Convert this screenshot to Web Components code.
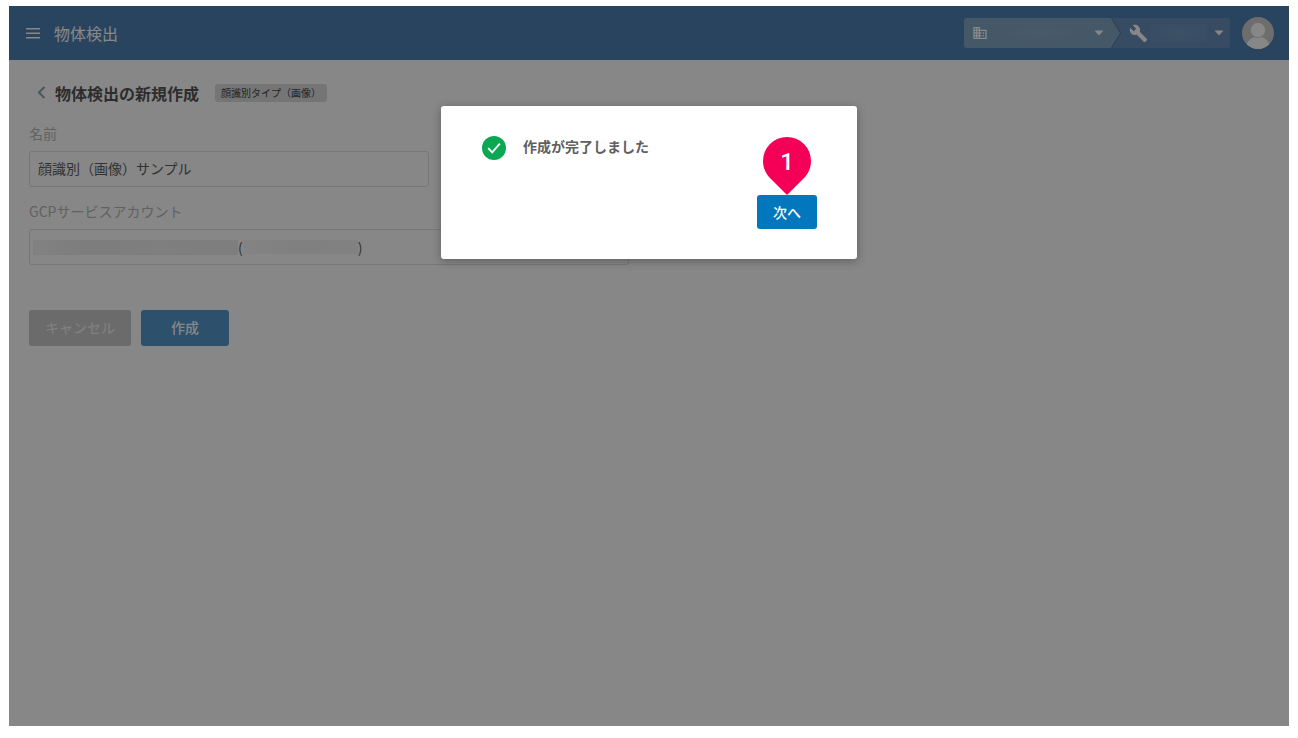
<!DOCTYPE html>
<html lang="ja">
<head>
<meta charset="utf-8">
<meta name="viewport" content="width=device-width, initial-scale=1">
<title>物体検出</title>
<style>
  body {
    margin: 6px 9px 12px;
    background: #fff;
    color: #606060;
    font: 14px/20px "Noto Sans CJK JP", sans-serif;
  }
</style>
</head>
<body>
<app-shell>
  <app-header slot="header" title-text="物体検出"></app-header>
  <page-heading title-text="物体検出の新規作成" tag="顔識別タイプ（画像）"></page-heading>
  <create-form name-value="顔識別（画像）サンプル"></create-form>
  <result-dialog slot="overlay" message="作成が完了しました">
    <app-button slot="action" kind="primary">次へ</app-button>
    <step-pin slot="pin">1</step-pin>
  </result-dialog>
</app-shell>

<script>
class AppShell extends HTMLElement {
  constructor() {
    super();
    this.attachShadow({ mode: 'open' });
  }

  connectedCallback() {
    this.shadowRoot.innerHTML = `
      <style>
        :host {
          display: block;
          position: relative;
          min-height: calc(100vh - 18px);
          background: #fff;
          box-shadow: 0 2px 10px rgba(0, 0, 0, 0.22);
        }

        main {
          padding: 20px;
        }

        .overlay {
          position: absolute;
          inset: 0;
          display: flex;
          justify-content: center;
          align-items: flex-start;
          padding-top: 100px;
          background: rgba(0, 0, 0, 0.47);
        }
      </style>
      <slot name="header"></slot>
      <main><slot></slot></main>
      <div class="overlay"><slot name="overlay"></slot></div>
    `;
  }
}

class AppHeader extends HTMLElement {
  constructor() {
    super();
    this.attachShadow({ mode: 'open' });
  }

  connectedCallback() {
    const title = this.getAttribute('title-text') || '';

    this.shadowRoot.innerHTML = `
      <style>
        :host {
          display: flex;
          align-items: center;
          height: 54px;
          padding: 0 15px;
          background: #4f80b3;
          color: #fff;
        }

        svg {
          display: block;
          flex: none;
        }

        .menu {
          padding: 0;
          border: 0;
          background: none;
          color: inherit;
        }

        h1 {
          flex: 1;
          margin: 0 0 0 12px;
          font-size: 16px;
          font-weight: 400;
          line-height: 24px;
        }

        .avatar {
          margin-left: 12px;
          padding: 0;
          border: 0;
          background: none;
        }
      </style>
      <button class="menu" type="button" aria-label="メニュー">
        <svg width="18" height="18" viewBox="0 0 18 18" stroke="currentColor" stroke-width="1.5">
          <path d="M2 4.7h14M2 9.2h14M2 13.7h14"/>
        </svg>
      </button>
      <h1>${title}</h1>
      <scope-picker></scope-picker>
      <button class="avatar" type="button" aria-label="アカウント">
        <svg width="32" height="32" viewBox="0 0 32 32">
          <clipPath id="round"><circle cx="16" cy="16" r="16"/></clipPath>
          <g clip-path="url(#round)">
            <rect width="32" height="32" fill="#cfcfcf"/>
            <path d="M16 19.5c6 0 10.5 4 11.5 9V34h-23v-5.500c1-5 5.500-9 11.500-9z" fill="#fff"/>
            <circle cx="16" cy="13" r="8" fill="#cfcfcf"/>
            <circle cx="16" cy="13" r="7.200" fill="#fff"/>
          </g>
        </svg>
      </button>
    `;
  }
}

class ScopePicker extends HTMLElement {
  constructor() {
    super();
    this.attachShadow({ mode: 'open' });
  }

  connectedCallback() {
    this.shadowRoot.innerHTML = `
      <style>
        :host {
          display: flex;
          height: 30px;
          border-radius: 3px;
          overflow: hidden;
          background: #6890b9;
          color: #fff;
        }

        label {
          display: flex;
          align-items: center;
        }

        svg {
          display: block;
          flex: none;
        }

        .org, .org-edge {
          clip-path: polygon(0 0, calc(100% - 9px) 0, 100% 50%, calc(100% - 9px) 100%, 0 100%);
        }

        .org {
          height: 100%;
          padding: 0 16px 0 8px;
          background: #83a6c4;
        }

        .org-edge {
          padding-right: 1px;
          background: #4676aa;
        }

        .project {
          padding: 0 6px 0 8px;
        }

        select {
          appearance: none;
          height: 18px;
          margin: 0 5px;
          padding: 0;
          border: 0;
          border-radius: 0;
          color: inherit;
          font: inherit;
        }

        .org select {
          width: 96px;
          background: radial-gradient(closest-side, #8babc7, #83a6c4);
        }

        .project select {
          width: 56px;
          margin: 0 7px 0 3px;
          background: radial-gradient(closest-side, #7398c1, #6c93bd);
        }
      </style>
      <div class="org-edge">
        <label class="org">
          <svg width="16" height="16" viewBox="0 0 24 24" fill="currentColor">
            <path d="M12 7V3H2v18h20V7H12zM6 19H4v-2h2v2zm0-4H4v-2h2v2zm0-4H4V9h2v2zm0-4H4V5h2v2zm4 12H8v-2h2v2zm0-4H8v-2h2v2zm0-4H8V9h2v2zm0-4H8V5h2v2zm10 12h-8v-2h2v-2h-2v-2h2v-2h-2V9h8v10zm-2-8h-2v2h2v-2zm0 4h-2v2h2v-2z"/>
          </svg>
          <select aria-label="組織"><option></option></select>
          <svg width="10" height="6" viewBox="0 0 10 6" fill="currentColor"><path d="M0.500 0.500h9L5 5.500z"/></svg>
        </label>
      </div>
      <label class="project">
        <svg width="19" height="19" viewBox="0 0 24 24" fill="currentColor">
          <path d="M22.700 19l-9.100-9.100c.9-2.300.4-5-1.500-6.900-2-2-5-2.400-7.400-1.300L9 6 6 9 1.600 4.700C.4 7.100.9 10.100 2.900 12.100c1.900 1.900 4.600 2.400 6.900 1.500l9.100 9.100c.4.4 1 .4 1.400 0l2.300-2.300c.5-.4.5-1.100.1-1.400z"/>
        </svg>
        <select aria-label="プロジェクト"><option></option></select>
        <svg width="10" height="6" viewBox="0 0 10 6" fill="currentColor"><path d="M0.500 0.500h9L5 5.500z"/></svg>
      </label>
    `;
  }
}

class PageHeading extends HTMLElement {
  constructor() {
    super();
    this.attachShadow({ mode: 'open' });
  }

  connectedCallback() {
    const title = this.getAttribute('title-text') || '';
    const tag = this.getAttribute('tag') || '';

    this.shadowRoot.innerHTML = `
      <style>
        :host {
          display: flex;
          align-items: center;
          margin-bottom: 17px;
        }

        a {
          padding: 0 8px 0 6px;
          color: #8fa0a6;
        }

        svg {
          display: block;
        }

        h2 {
          margin: 0;
          color: #555;
          font-size: 16px;
          font-weight: 700;
          line-height: 26px;
        }

        .tag {
          margin-left: 16px;
          padding: 0 6px;
          border-radius: 3px;
          background: #dedede;
          color: #444;
          font-size: 10px;
          line-height: 18px;
        }
      </style>
      <a href="#" aria-label="戻る">
        <svg width="12" height="14" viewBox="0 0 12 14" fill="none" stroke="currentColor" stroke-width="2">
          <path d="M9.500 1L4 6.500l5.500 5.500"/>
        </svg>
      </a>
      <h2>${title}</h2>
      <span class="tag">${tag}</span>
    `;
  }
}

class CreateForm extends HTMLElement {
  constructor() {
    super();
    this.attachShadow({ mode: 'open' });
  }

  connectedCallback() {
    const name = this.getAttribute('name-value') || '';

    this.shadowRoot.innerHTML = `
      <style>
        :host {
          display: block;
        }

        .field {
          display: grid;
          gap: 8px;
          margin-bottom: 14px;
        }

        .field > label {
          color: #b8b8b8;
        }

        input, select {
          appearance: none;
          box-sizing: border-box;
          width: 100%;
          height: 36px;
          padding: 0 8px 2px;
          border: 1px solid #e0e0e0;
          border-radius: 3px;
          background: #fff;
          color: inherit;
          font: inherit;
        }

        input {
          max-width: 400px;
        }

        /* the masked account is laid over the select in the same cell */
        .account {
          display: grid;
          align-items: center;
          max-width: 600px;
        }

        .account > * {
          grid-area: 1 / 1;
        }

        .value {
          display: flex;
          align-items: center;
          padding-left: 4px;
          pointer-events: none;
        }

        .mask {
          width: 205px;
          height: 15px;
          background: linear-gradient(90deg, #f4f4f4, #ececec 30%, #f0f0f0 60%, #eee);
        }

        .mask.short {
          width: 115px;
          height: 14px;
          background: linear-gradient(90deg, #f8f8f8, #f1f1f1 50%, #f4f4f4);
        }

        .actions {
          display: flex;
          gap: 10px;
          margin-top: 45px;
        }
      </style>
      <form>
        <div class="field">
          <label for="name">名前</label>
          <input id="name" type="text" value="${name}">
        </div>
        <div class="field">
          <label for="account">GCPサービスアカウント</label>
          <div class="account">
            <select id="account"><option></option></select>
            <div class="value">
              <span class="mask"></span><span>(</span><span class="mask short"></span><span>)</span>
            </div>
          </div>
        </div>
        <div class="actions">
          <app-button kind="muted">キャンセル</app-button>
          <app-button kind="submit">作成</app-button>
        </div>
      </form>
    `;
  }
}

class AppButton extends HTMLElement {
  constructor() {
    super();
    this.attachShadow({ mode: 'open' });
  }

  connectedCallback() {
    const kinds = {
      muted: { bg: '#cbcbcb', color: '#f4f4f4', padding: '7px 16px 9px', weight: 400 },
      submit: { bg: '#5599cc', color: '#fff', padding: '7px 30px 9px', weight: 500 },
      primary: { bg: '#0277bd', color: '#fff', padding: '7px 16px', weight: 500 }
    };
    const kind = kinds[this.getAttribute('kind')] || kinds.primary;

    this.shadowRoot.innerHTML = `
      <style>
        :host {
          display: block;
        }

        button {
          display: block;
          padding: ${kind.padding};
          border: 0;
          border-radius: 3px;
          background: ${kind.bg};
          color: ${kind.color};
          font: inherit;
          font-weight: ${kind.weight};
          white-space: nowrap;
        }
      </style>
      <button type="button"><slot></slot></button>
    `;
  }
}

class ResultDialog extends HTMLElement {
  constructor() {
    super();
    this.attachShadow({ mode: 'open' });
  }

  connectedCallback() {
    const message = this.getAttribute('message') || '';

    this.shadowRoot.innerHTML = `
      <style>
        :host {
          display: block;
          box-sizing: border-box;
          width: 416px;
          max-width: 100%;
          padding: 30px 40px;
          border-radius: 3px;
          background: #fff;
          box-shadow: 0 2px 10px rgba(0, 0, 0, 0.3);
        }

        .message {
          display: flex;
          gap: 16px;
        }

        p {
          margin: 0;
          font-weight: 700;
        }

        svg {
          display: block;
          flex: none;
        }

        .actions {
          display: flex;
          justify-content: flex-end;
          margin-top: 35px;
        }

        .anchor {
          position: relative;
        }

        ::slotted([slot="pin"]) {
          position: absolute;
          bottom: 100%;
          left: calc(50% - 24px);
        }
      </style>
      <div role="dialog" aria-labelledby="message">
        <div class="message">
          <svg width="26" height="24" viewBox="0 0 26 24">
            <circle cx="13" cy="12" r="12" fill="#0ba854"/>
            <path d="M7.200 12.200l4 4.200 7.600-8.800" fill="none" stroke="#fff" stroke-width="1.800"/>
          </svg>
          <p id="message">${message}</p>
        </div>
        <div class="actions">
          <div class="anchor">
            <slot name="action"></slot>
            <slot name="pin"></slot>
          </div>
        </div>
      </div>
    `;
  }
}

class StepPin extends HTMLElement {
  constructor() {
    super();
    this.attachShadow({ mode: 'open' });
  }

  connectedCallback() {
    this.shadowRoot.innerHTML = `
      <style>
        :host {
          display: grid;
          width: 48px;
          color: #fff;
          font: 500 24px/50px Roboto, sans-serif;
          text-align: center;
        }

        svg, span {
          grid-area: 1 / 1;
        }

        svg {
          display: block;
        }
      </style>
      <svg width="48" height="58" viewBox="0 0 48 58" fill="#f50057">
        <path d="M24 58L7 41C2.500 36.500 0 30.500 0 24a24 24 0 0 1 48 0c0 6.500-2.500 12.500-7 17z"/>
      </svg>
      <span><slot></slot></span>
    `;
  }
}

customElements.define('app-shell', AppShell);
customElements.define('app-header', AppHeader);
customElements.define('scope-picker', ScopePicker);
customElements.define('page-heading', PageHeading);
customElements.define('create-form', CreateForm);
customElements.define('app-button', AppButton);
customElements.define('result-dialog', ResultDialog);
customElements.define('step-pin', StepPin);
</script>
</body>
</html>
